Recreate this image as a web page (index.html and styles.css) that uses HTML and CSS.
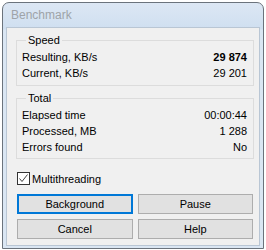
FILE: index.html
```html
<!DOCTYPE html>
<html lang="en">

<head>
    <meta charset="UTF-8">
    <title>Benchmark</title>
    <link rel="stylesheet" href="styles.css">
</head>

<body>
    <div class="window">
        <div class="title-bar">Benchmark</div>
        <div class="client">
            <fieldset class="group group-speed">
                <legend>Speed</legend>
                <div class="row"><span>Resulting, KB/s</span><span class="bold">29 874</span></div>
                <div class="row"><span>Current, KB/s</span><span>29 201</span></div>
            </fieldset>
            <fieldset class="group group-total">
                <legend>Total</legend>
                <div class="row"><span>Elapsed time</span><span>00:00:44</span></div>
                <div class="row"><span>Processed, MB</span><span>1 288</span></div>
                <div class="row"><span>Errors found</span><span>No</span></div>
            </fieldset>
            <label class="check">
                <span class="check-box">
                    <svg width="11" height="11" viewBox="0 0 11 11">
                        <path d="M1.5 5.5 L4 8.5 L9.5 1.5" fill="none" stroke="#444" stroke-width="1"/>
                    </svg>
                </span>
                Multithreading
            </label>
            <div class="buttons">
                <button class="btn btn-default">Background</button>
                <button class="btn">Pause</button>
                <button class="btn">Cancel</button>
                <button class="btn">Help</button>
            </div>
        </div>
    </div>
</body>

</html>
```

FILE: styles.css
```css
body,
html {
    margin: 0;
    padding: 0;
    background: #ffffff;
    font-family: "Liberation Sans", Arial, sans-serif;
    font-size: 11px;
    color: #000;
}

.window {
    margin: 2px 2px 0 2px;
    width: 260px;
    height: 245px;
    border: 1px solid #6b737c;
    border-radius: 7px 7px 0 0;
    background: linear-gradient(#dce7f4, #cfdff0 26px, #dae6f3 27px);
    display: flex;
    flex-direction: column;
}

.title-bar {
    height: 24px;
    line-height: 25px;
    padding-left: 8px;
    color: #9ea3a8;
    font-size: 12px;
}

.client {
    flex-grow: 1;
    margin: 0 3px 2px 3px;
    background: #f0f0f0;
    border: 1px solid #b9c6d4;
    display: flex;
    flex-direction: column;
    padding: 0 5px 0 9px;
}

.group {
    margin: 6px 0 0 0;
    border: 1px solid #dcdcdc;
    padding: 2px 6px 4px 5px;
    min-width: 0;
}

.group legend {
    padding: 0 2px;
    margin-left: 4px;
    line-height: 13px;
}

.group-total {
    margin-top: 6px;
    padding-top: 2px;
    padding-bottom: 3px;
}

.row {
    display: flex;
    justify-content: space-between;
    line-height: 16px;
}

.bold {
    font-weight: bold;
}

.check {
    display: flex;
    align-items: center;
    margin-top: 13px;
    height: 13px;
    margin-left: 1px;
}

.check-box {
    width: 11px;
    height: 11px;
    border: 1px solid #333;
    background: #fff;
    margin-right: 2px;
    display: flex;
}

.buttons {
    display: grid;
    grid-template-columns: 1fr 1fr;
    gap: 5px;
    margin-top: 9px;
    margin-left: 1px;
    margin-right: 1px;
}

.btn {
    height: 20px;
    padding: 0;
    margin: 0;
    font-family: "Liberation Sans", Arial, sans-serif;
    font-size: 11px;
    background: #e1e1e1;
    border: 1px solid #adadad;
    color: #000;
}

.btn-default {
    border: 2px solid #0078d7;
}
```
